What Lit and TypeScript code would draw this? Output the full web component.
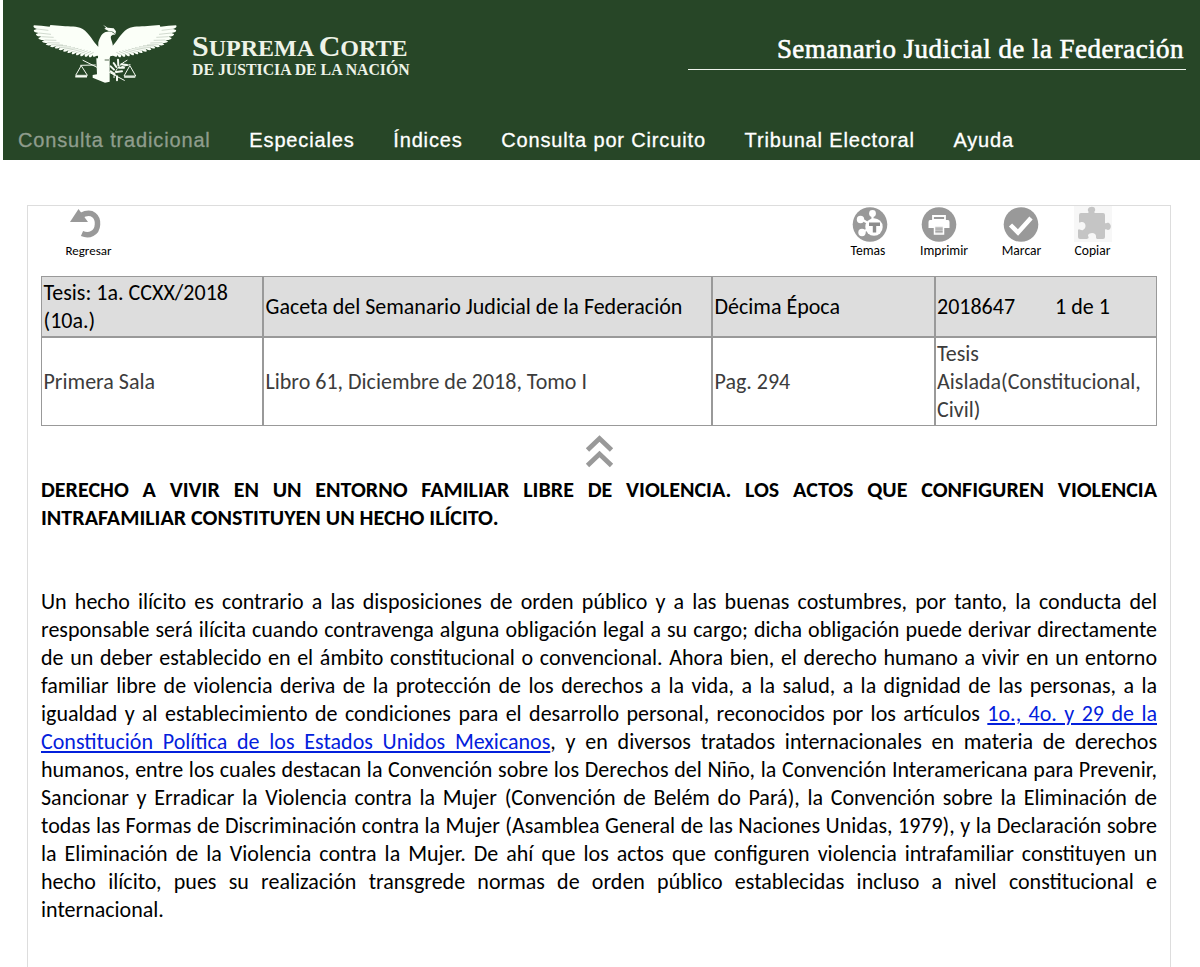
import { LitElement, html, css, svg } from "lit";
import { customElement } from "lit/decorators.js";

const NAV = [
  { label: "Consulta tradicional", off: true },
  { label: "Especiales", off: false },
  { label: "Índices", off: false },
  { label: "Consulta por Circuito", off: false },
  { label: "Tribunal Electoral", off: false },
  { label: "Ayuda", off: false },
];

const BEFORE = [
  "Un hecho ilícito es contrario a las disposiciones de orden público y a las buenas costumbres, por tanto, la conducta del",
  "responsable será ilícita cuando contravenga alguna obligación legal a su cargo; dicha obligación puede derivar directamente",
  "de un deber establecido en el ámbito constitucional o convencional. Ahora bien, el derecho humano a vivir en un entorno",
  "familiar libre de violencia deriva de la protección de los derechos a la vida, a la salud, a la dignidad de las personas, a la",
];
const AFTER = [
  "humanos, entre los cuales destacan la Convención sobre los Derechos del Niño, la Convención Interamericana para Prevenir,",
  "Sancionar y Erradicar la Violencia contra la Mujer (Convención de Belém do Pará), la Convención sobre la Eliminación de",
  "todas las Formas de Discriminación contra la Mujer (Asamblea General de las Naciones Unidas, 1979), y la Declaración sobre",
  "la Eliminación de la Violencia contra la Mujer. De ahí que los actos que configuren violencia intrafamiliar constituyen un",
  "hecho ilícito, pues su realización transgrede normas de orden público establecidas incluso a nivel constitucional e",
];

const wing = svg`
  <path d="M240 100 C231 104 222 99 213 88 C200 72 188 47 165 38 C150 32 126 35 104 32 L76 30 L74 35 C58 33 40 32 27 31 C23 35 27 40 36 42 L27 45 C25 50 31 53 41 54 L33 57 C32 62 40 65 49 65 L40 69 C41 74 51 76 59 75 L51 79 C53 84 62 85 69 83 L62 88 C65 92 74 92 80 89 L75 94 C80 98 87 97 93 93 L89 99 C94 102 100 101 105 97 L101 104 C107 107 113 105 118 101 L114 109 C120 112 126 109 130 105 L127 113 C133 115 138 113 142 109 L140 117 C146 119 151 116 154 112 L153 120 C159 122 163 119 166 115 L166 123 C172 125 176 121 178 117 L180 125 C186 126 188 123 190 119 L193 127 C199 127 201 124 202 120 L206 126 L216 122 L240 126 Z"/>`;
const feathers = svg`
  <g fill="none" stroke="#274627" stroke-width="1.2" opacity=".5">
    <path d="M36 42 L70 46 M41 54 L78 58 M49 65 L86 67 M59 75 L94 76 M69 83 L104 84 M80 89 L114 90 M93 93 L126 92 M105 98 L138 95 M118 102 L150 98 M130 106 L160 100 M142 110 L170 103 M154 113 L179 105 M166 116 L188 107 M178 118 L198 109 M190 120 L206 112"/>
  </g>`;

@customElement("app-root")
export class AppRoot extends LitElement {
  static styles = css`
    :host {
      display: block;
      height: 967px;
      overflow: hidden;
      background: #fff;
      font-family: Carlito, Lato, sans-serif;
      color: #000;
    }
    header {
      box-sizing: border-box;
      height: 160px;
      margin-left: 3px;
      background: #274627;
      color: #fff;
      display: flex;
      flex-direction: column;
      justify-content: space-between;
    }
    .top { display: flex; justify-content: space-between; padding: 15px 14px 0 22px; }
    .brand { display: flex; }
    .eagle { width: 160px; height: 75px; flex: none; }
    .court {
      font-family: "Liberation Serif", serif;
      font-weight: 700;
      color: #eef3e8;
      padding: 15px 0 0 7px;
      white-space: nowrap;
    }
    .l1 { font-size: 24px; line-height: 32px; }
    .l1 .cap { font-size: 30px; }
    .l2 { font-size: 15.8px; line-height: 16px; margin-top: -2px; }
    .title {
      box-sizing: border-box;
      width: 498px;
      height: 55px;
      border-bottom: 1px solid #eef3ec;
      padding: 17px 2px 0 0;
      text-align: right;
      font: 27px/34px "Liberation Serif", serif;
      letter-spacing: 0.45px;
      -webkit-text-stroke: 0.6px #fff;
      white-space: nowrap;
    }
    nav {
      display: flex;
      gap: 38.7px;
      padding: 0 0 8px 15px;
      font: 20px/24px "Liberation Sans", sans-serif;
      letter-spacing: 0.85px;
      white-space: nowrap;
      -webkit-text-stroke: 0.3px currentColor;
    }
    .off { color: #8f9d8d; }
    main {
      box-sizing: border-box;
      width: 1144px;
      height: 780px;
      margin: 45px 0 0 27px;
      border: 1px solid #ddd;
      padding: 0 13px;
    }
    .tools { display: flex; height: 70px; font-size: 13.6px; line-height: 16px; }
    .tool { display: flex; flex-direction: column; align-items: center; gap: 1px; white-space: nowrap; }
    .tool svg { width: 38px; height: 36px; display: block; }
    .back { width: 95px; margin-right: auto; font-size: 13px; }
    .t1 { width: 74px; }
    .t1 svg { margin-left: 3px; }
    .t2 { width: 78px; }
    .t2 svg { margin-right: 10px; }
    .t3 { width: 77px; }
    .t3 svg { margin-right: 2px; }
    .t4 { width: 65px; margin-right: 32px; }
    .grid {
      display: grid;
      grid-template-columns: 222px 449px 223px 222px;
      grid-template-rows: 61px 89px;
      width: 1116px;
      font-size: 22px;
      line-height: 28px;
    }
    .cell {
      box-sizing: border-box;
      border: 1px solid #999;
      padding: 0 1.5px;
      display: flex;
      align-items: center;
      color: #3c3c3c;
      white-space: nowrap;
    }
    .last { padding-left: 1px; }
    .head { background: #ddd; color: #000; }
    .count { margin-left: 40px; }
    .up { display: block; width: 60px; height: 50px; margin: 0 auto; }
    .text { font-size: 22px; line-height: 28px; }
    .line { display: block; white-space: nowrap; text-align: justify; text-align-last: justify; }
    .left { text-align-last: left; }
    h1 { margin: 0 0 56px; font-size: 22px; line-height: 28px; font-weight: 700; }
    p { margin: 0; }
    a { color: #0320dc; text-decoration: underline; text-decoration-thickness: 1.5px; text-underline-offset: 2px; }
  `;

  render() {
    return html`
      <header>
        <div class="top">
          <div class="brand">
            <svg class="eagle" viewBox="0 0 480 225" fill="#fbfff8">
              ${wing}${feathers}
              <g transform="translate(480 0) scale(-1 1)">${wing}${feathers}</g>
              <path d="M219 130 L220 82 C225 65 232 51 247 50 C258 48 266 52 271 60 C265 58 260 60 258 64 C255 72 265 83 264 99 L254 130 L254 200 L240 203 L203 188 L203 180 L216 178 L214 130Z"/>
              <path d="M234 29 L248 38 L266 40 L273 49 L271 58 L264 50 L251 48 L238 41 L243 38Z"/>
              <path d="M239 135 h13" stroke="#7a8c77" stroke-width="4"/>
              <g fill="none" stroke="#f5faf2" stroke-width="4" stroke-linecap="round">
                <path d="M174 136 L218 158 M168 153 L152 181 H186 Z M314 153 L297 183 H331 Z M253 172 L298 196 M267 188 C265 172 282 148 306 136" stroke-width="3"/>
                <path d="M167 151 L211 150 M290 155 L315 149" stroke-width="3"/>
                <path d="M153 185 H184 M299 186 H329" stroke-width="5"/>
                <path d="M257 154 l10 10 M266 144 l8 12 M279 134 l1 17 M282 158 h15 M274 171 l17 -2 M289 148 l17 2 M257 169 l12 9 M276 184 v12" stroke-width="6"/>
              </g>
            </svg>
            <div class="court">
              <div class="l1"><span class="cap">S</span>UPREMA <span class="cap">C</span>ORTE</div>
              <div class="l2">DE JUSTICIA DE LA NACIÓN</div>
            </div>
          </div>
          <div class="title">Semanario Judicial de la Federación</div>
        </div>
        <nav>${NAV.map((n) => html`<span class=${n.off ? "off" : ""}>${n.label}</span>`)}</nav>
      </header>
      <main>
        <div class="tools">
          <div class="tool back">
            <svg viewBox="0 0 38 36"><path d="M0 16 L8.500 3 L18 16Z" fill="#999"/><path d="M11 9.500 C23 3.500 28 11.500 27.500 18.500 C27 27.500 19 30.500 12 27.500" fill="none" stroke="#999" stroke-width="5.500"/></svg>
            <span>Regresar</span>
          </div>
          <div class="tool t1">
            <svg viewBox="0 0 38 36"><circle cx="19" cy="18.500" r="17.300" fill="#999"/><g fill="#fff"><circle cx="23" cy="21" r="8.700"/><circle cx="21.500" cy="7.500" r="3.400"/><circle cx="9.500" cy="13.500" r="3.700"/><circle cx="11" cy="26.500" r="3.700"/><path d="M21.500 7v8M10 13l7 4M11 26l7-3" stroke="#fff" stroke-width="2.200"/></g><path d="M18 18.200h11M23.500 18v8.500" stroke="#8c8c8c" stroke-width="3.400"/></svg>
            <span>Temas</span>
          </div>
          <div class="tool t2">
            <svg viewBox="0 0 38 36"><circle cx="19" cy="18.500" r="17.300" fill="#999"/><path d="M13 10h12v4h-12z" fill="none" stroke="#fff" stroke-width="1.800"/><path d="M10 14h18q1.500 0 1.500 2v6h-21v-6q0-2 1.500-2z" fill="#fff"/><path d="M14.500 20h9v8h-9z" fill="#c4c4c4" stroke="#fff" stroke-width="1.500"/><path d="M15.500 23h7M15.500 25.500h7" stroke="#a5a5a5"/></svg>
            <span>Imprimir</span>
          </div>
          <div class="tool t3">
            <svg viewBox="0 0 38 36"><circle cx="19" cy="18.500" r="17.300" fill="#999"/><path d="M8.500 19 L16 26.500 L29 12" fill="none" stroke="#fff" stroke-width="4.500"/></svg>
            <span>Marcar</span>
          </div>
          <div class="tool t4">
            <svg viewBox="0 0 38 36"><rect width="38" height="36" fill="#f7f7f7"/><path d="M5 9 Q5 7 7 7 H14 C16 6 13 5 14 3 C15 0 21 0 21 3 C22 5 19 6 21 7 H29 Q31 7 31 9 V17 C32 18 33 16 35 17 C38 19 37 24 34 24 C32 24 32 22 31 24 V31 Q31 33 29 33 H23 C21 32 23 30 21 28 C19 26 15 27 14 29 C14 31 16 32 13 33 H6 Q4 33 4 31 V24 C5 22 7 25 9 24 C13 22 12 16 8 16 C6 16 5 18 5 15Z" fill="#c5c5c5"/></svg>
            <span>Copiar</span>
          </div>
        </div>
        <div class="grid">
          <div class="cell head"><div>Tesis: 1a. CCXX/2018<br />(10a.)</div></div>
          <div class="cell head">Gaceta del Semanario Judicial de la Federación</div>
          <div class="cell head">Décima Época</div>
          <div class="cell head last"><span>2018647</span><span class="count">1 de 1</span></div>
          <div class="cell">Primera Sala</div>
          <div class="cell">Libro 61, Diciembre de 2018, Tomo I</div>
          <div class="cell">Pag. 294</div>
          <div class="cell last"><div>Tesis<br />Aislada(Constitucional,<br />Civil)</div></div>
        </div>
        <svg class="up" viewBox="0 0 60 50"><path d="M18.500 24 L30.500 12.500 L42.500 24 M18.500 39.500 L30.500 28 L42.500 39.500" fill="none" stroke="#999" stroke-width="4.800"/></svg>
        <h1>
          <span class="line">DERECHO A VIVIR EN UN ENTORNO FAMILIAR LIBRE DE VIOLENCIA. LOS ACTOS QUE CONFIGUREN VIOLENCIA</span>
          <span class="line left">INTRAFAMILIAR CONSTITUYEN UN HECHO ILÍCITO.</span>
        </h1>
        <p class="text">
          ${BEFORE.map((l) => html`<span class="line">${l}</span>`)}
          <span class="line">igualdad y al establecimiento de condiciones para el desarrollo personal, reconocidos por los artículos <a>1o., 4o. y 29 de la</a></span>
          <span class="line"><a>Constitución Política de los Estados Unidos Mexicanos</a>, y en diversos tratados internacionales en materia de derechos</span>
          ${AFTER.map((l) => html`<span class="line">${l}</span>`)}
          <span class="line left">internacional.</span>
        </p>
      </main>
    `;
  }
}
